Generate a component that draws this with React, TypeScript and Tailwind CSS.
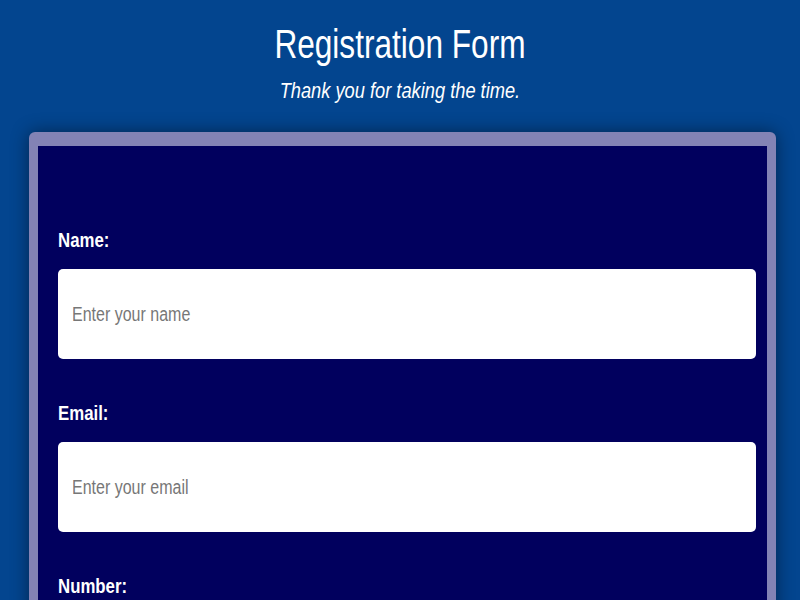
import React from "react";

const fields = [
  { label: "Name:", placeholder: "Enter your name", type: "text" },
  { label: "Email:", placeholder: "Enter your email", type: "email" },
  { label: "Number:", placeholder: "Enter your number", type: "tel" },
];

const App = () => {
  return (
    <div className="min-h-screen w-full bg-[#03458f] font-['Liberation_Sans',Arial,sans-serif] overflow-hidden">
      {/* header text is condensed, so squeeze it horizontally */}
      <div className="pt-[20px] flex flex-col items-center text-white">
        <h1 className="text-[40px] leading-[48px] font-normal scale-x-[0.79] origin-center">Registration Form</h1>
        <p className="mt-[10px] text-[22px] leading-[26px] italic scale-x-[0.83] origin-center">Thank you for taking the time.</p>
      </div>

      <div className="mt-[28px] ml-[29px] w-[747px] bg-[#8383b5] rounded-md pt-[14px] px-[9px] shadow-[0_0_18px_rgba(0,0,0,0.45)]">
        <form className="bg-[#01005e] pt-[81px] pl-[20px] pr-[11px] pb-10 flex flex-col">
          {fields.map((f) => (
            <div key={f.label} className="flex flex-col mb-[41px]">
              <label className="self-start text-white font-bold text-[21px] leading-[25px] scale-x-[0.8] origin-left">
                {f.label}
              </label>
              <div className="mt-[17px] h-[90px] w-full bg-white rounded-[5px] overflow-hidden">
                <input
                  type={f.type}
                  placeholder={f.placeholder}
                  className="h-full w-[125%] bg-transparent pl-[17.5px] text-[20px] text-[#333] placeholder:text-[#777] outline-none scale-x-[0.8] origin-left"
                />
              </div>
            </div>
          ))}
        </form>
      </div>
    </div>
  );
};

export default App;
